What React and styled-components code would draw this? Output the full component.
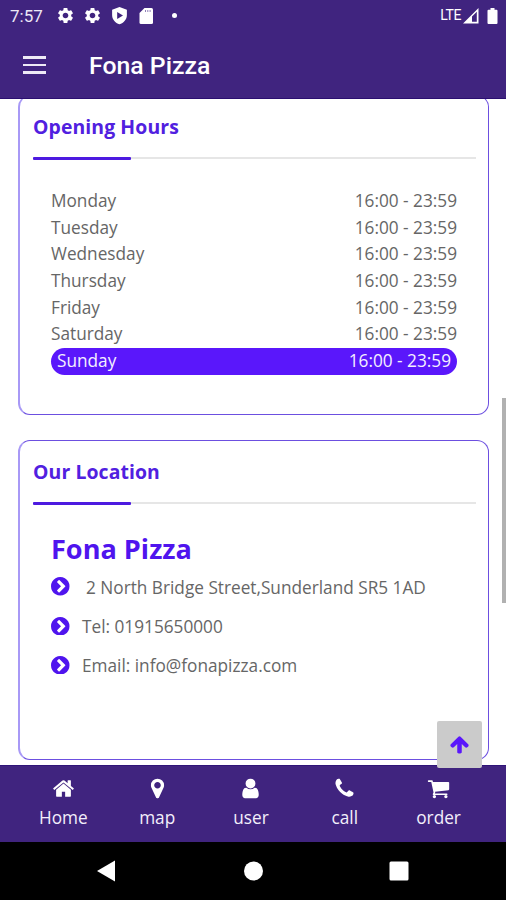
import React from "react";
import styled, { createGlobalStyle } from "styled-components";
import { MdSettings } from "react-icons/md";

const Global = createGlobalStyle`
  * { box-sizing: border-box; }
  body { margin: 0; background: #fff; font-family: "Open Sans", sans-serif; }
`;

const Screen = styled.div`
  width: 506px;
  height: 900px;
  display: flex;
  flex-direction: column;
  overflow: hidden;
  background: #fff;
`;

const StatusBar = styled.div`
  flex: none;
  height: 32px;
  display: flex;
  align-items: center;
  padding: 0 8px 0 10px;
  background: #40247f;
  color: #fff;
  font-family: Roboto, sans-serif;
`;

const Clock = styled.span`
  width: 46px;
  font-size: 17px;
  line-height: 32px;
  color: #ece8f6;
`;

const StatusIcons = styled.div`
  display: flex;
  align-items: center;
  gap: 8px;
  margin-top: -1px;
  svg { display: block; }
`;

const Dot = styled.span`
  width: 5px;
  height: 5px;
  margin-left: 9px;
  border-radius: 50%;
  background: #fff;
`;

const Network = styled.span`
  margin-left: auto;
  margin-top: -2px;
  margin-right: 2px;
  font-size: 14px;
  letter-spacing: -0.4px;
`;

const Signal = styled.svg`
  display: block;
  margin-right: 8px;
`;

const AppBar = styled.header`
  flex: none;
  height: 67px;
  display: flex;
  align-items: center;
  padding-left: 23px;
  background: #40247f;
  border-bottom: 1px solid #2b0f70;
`;

const MenuButton = styled.button`
  display: flex;
  flex-direction: column;
  gap: 5px;
  width: 23px;
  margin: 0 43px 0 0;
  padding: 0;
  border: 0;
  background: none;
`;

const MenuLine = styled.span`
  height: 2.5px;
  background: #eeeaf6;
`;

const AppTitle = styled.h1`
  margin: 2px 0 0;
  color: #fff;
  font: 500 24.8px/32px Roboto, sans-serif;
`;

const Content = styled.main`
  flex: none;
  height: 666px;
  display: flex;
  flex-direction: column;
  gap: 25px;
  padding: 0 17px 0 18px;
  overflow: hidden;
`;

const Card = styled.section`
  flex: none;
  height: ${(p) => p.$height}px;
  margin-top: ${(p) => p.$shift || 0}px;
  padding: 17px 12px 0 13px;
  border: 1px solid #6c4fe0;
  border-left: 2px solid #a899f6;
  border-radius: 12px;
`;

const CardTitle = styled.h2`
  margin: 0;
  color: #5120e0;
  font-size: 19.4px;
  line-height: 28px;
  font-weight: 700;
  letter-spacing: 0.1px;
`;

const Rule = styled.div`
  height: 3px;
  margin-top: 16px;
  background: linear-gradient(#e6e6e6, #e6e6e6) 0 0 / 100% 2px no-repeat;
`;

const RuleAccent = styled.div`
  width: 98px;
  height: 3px;
  border-radius: 1px;
  background: #4d1ae0;
`;

const Hours = styled.div`
  margin: 28px 19px 0 18px;
`;

const HoursRow = styled.div`
  display: flex;
  justify-content: space-between;
  height: 26.7px;
  padding: 0 ${(p) => (p.$active ? 6 : 0)}px;
  border-radius: 14px;
  background: ${(p) => (p.$active ? "#5a17fb" : "transparent")};
  color: ${(p) => (p.$active ? "#f4efff" : "#666")};
  font-size: 17.23px;
  line-height: 26.7px;
`;

const Location = styled.div`
  margin: 26px 18px 0;
`;

const PlaceName = styled.h3`
  margin: 0;
  color: #4f14ee;
  font-size: 27.1px;
  line-height: 36px;
  font-weight: 700;
`;

const ContactRow = styled.div`
  display: flex;
  align-items: center;
  gap: 12.5px;
  height: 39.2px;
  color: #666;
  font-size: 17.23px;
  svg { flex: none; }
`;

const ContactText = styled.span`
  white-space: pre;
  padding-top: 1px;
  padding-left: ${(p) => p.$indent || 0}px;
`;

const ScrollThumb = styled.div`
  position: absolute;
  left: 502px;
  top: 398px;
  width: 4px;
  height: 205px;
  background: #b1b1b1;
`;

const TopButton = styled.button`
  position: absolute;
  left: 437px;
  top: 721px;
  width: 45px;
  height: 47px;
  display: flex;
  align-items: center;
  justify-content: center;
  padding: 0;
  border: 0;
  border-radius: 2px;
  background: #cbcbcb;
`;

const TabBar = styled.nav`
  flex: none;
  height: 77px;
  display: grid;
  grid-template-columns: repeat(5, 93.8px);
  padding-left: 16.5px;
  background: #40247f;
  border-top: 1px solid #2f1478;
`;

const Tab = styled.a`
  display: flex;
  flex-direction: column;
  align-items: center;
  padding-top: 11px;
  color: #f3effb;
  font-size: 17.23px;
  line-height: 24px;
  svg { margin-bottom: 6px; color: #fff; }
`;

const SystemNav = styled.div`
  flex: none;
  height: 58px;
  display: flex;
  align-items: center;
  justify-content: center;
  background: #000;
`;

const PATHS = {
  home: "M1472 992v480q0 26-19 45t-45 19h-384v-384h-256v384h-384q-26 0-45-19t-19-45v-480q0-1 .5-3t.5-3l575-474 575 474q1 2 1 6zm223-69l-62 74q-8 9-21 11h-3q-13 0-21-7l-692-577-692 577q-12 8-24 7-13-2-21-11l-62-74q-8-10-7-23.5t11-21.5l719-599q32-26 76-26t76 26l244 204v-195q0-14 9-23t23-9h192q14 0 23 9t9 23v408l219 182q10 8 11 21.5t-7 23.5z",
  map: "M1152 640q0-106-75-181t-181-75-181 75-75 181 75 181 181 75 181-75 75-181zm256 0q0 109-33 179l-364 774q-16 33-47.5 52t-67.5 19-67.5-19-46.5-52l-365-774q-33-70-33-179 0-212 150-362t362-150 362 150 150 362z",
  user: "M1536 1399q0 109-62.5 187t-150.5 78h-854q-88 0-150.5-78t-62.5-187q0-85 8.5-160.5t31.5-152 58.5-131 94-89 134.5-34.5q131 128 313 128t313-128q76 0 134.5 34.5t94 89 58.5 131 31.5 152 8.5 160.5zm-256-887q0 159-112.5 271.5t-271.5 112.5-271.5-112.5-112.5-271.5 112.5-271.5 271.5-112.5 271.5 112.5 112.5 271.5z",
  call: "M1600 1240q0 27-10 70.5t-21 68.5q-21 50-122 106-94 51-186 51-27 0-53-3.5t-57.5-12.5-47-14.5-55.5-20.5-49-18q-98-35-175-83-127-79-264-216t-216-264q-48-77-83-175-3-9-18-49t-20.5-55.5-14.5-47-12.5-57.5-3.5-53q0-92 51-186 56-101 106-122 25-11 68.5-21t70.5-10q14 0 21 3 18 6 53 76 11 19 30 54t35 63.5 31 53.5q3 4 17.5 25t21.5 35.5 7 28.5q0 20-28.5 50t-62 55-62 53-28.5 46q0 9 5 22.5t8.5 20.5 14 24 11.5 19q76 137 174 235t235 174q2 1 19 11.5t24 14 20.5 8.5 22.5 5q18 0 46-28.5t53-62 55-62 50-28.5q14 0 28.5 7t35.5 21.5 25 17.5q25 15 53.5 31t63.5 35 54 30q70 35 76 53 3 7 3 21z",
  order: "M704 1536q0 52-38 90t-90 38-90-38-38-90 38-90 90-38 90 38 38 90zm896 0q0 52-38 90t-90 38-90-38-38-90 38-90 90-38 90 38 38 90zm128-1088v512q0 24-16.5 42.5t-40.5 21.5l-1044 122q13 60 13 70 0 16-24 64h920q26 0 45 19t19 45-19 45-45 19h-1024q-26 0-45-19t-19-45q0-11 8-31.5t16-36 21.5-40 15.5-29.5l-177-823h-204q-26 0-45-19t-19-45 19-45 45-19h256q16 0 28.5 6.5t19.5 15.5 13 24.5 8 26 5.5 29.5 4.5 26h1201q26 0 45 19t19 45z",
  chevron: "M845 1395l454-454q19-19 19-45t-19-45l-454-454q-19-19-45-19t-45 19l-102 102q-19 19-19 45t19 45l307 307-307 307q-19 19-19 45t19 45l102 102q19 19 45 19t45-19zm819-499q0 209-103 385.5t-279.5 279.5-385.5 103-385.5-103-279.5-279.5-103-385.5 103-385.5 279.5-279.5 385.5-103 385.5 103 279.5 279.5 103 385.5z",
  up: "M1675 971q0 51-37 90l-75 75q-38 38-91 38-54 0-90-38l-294-293v704q0 52-37.5 84.5t-90.5 32.5h-128q-53 0-90.5-32.5t-37.5-84.5v-704l-294 293q-36 38-90 38t-90-38l-75-75q-38-38-38-90 0-53 38-91l651-651q35-37 90-37 54 0 91 37l651 651q37 39 37 91z",
};

const Icon = ({ name, size, color, box = "0 0 1792 1792" }) => (
  <svg width={size} height={size} viewBox={box} fill={color || "currentColor"}>
    <path d={PATHS[name]} />
  </svg>
);

const Bullet = () => <Icon name="chevron" size={18.5} color="#4f14ee" box="128 128 1536 1536" />;

const DAYS = ["Monday", "Tuesday", "Wednesday", "Thursday", "Friday", "Saturday", "Sunday"];
const TABS = [
  ["home", "Home"],
  ["map", "map"],
  ["user", "user"],
  ["call", "call"],
  ["order", "order"],
];

export default function App() {
  return (
    <>
      <Global />
      <Screen>
        <StatusBar>
          <Clock>7:57</Clock>
          <StatusIcons>
            <MdSettings size={19} />
            <MdSettings size={19} />
            <svg width="19" height="19" viewBox="0 0 18 18">
              <path fill="#fff" fillRule="evenodd" d="M9 1 16 3.6V8.5C16 12.800 13 16 9 17.300 5 16 2 12.800 2 8.500V3.600ZM6.800 5.700V12.300L12.300 9Z" />
            </svg>
            <svg width="18" height="18" viewBox="0 0 18 18">
              <path fill="#fff" d="M7.500 1H14.500Q16 1 16 2.500V15.500Q16 17 14.500 17H4Q2.500 17 2.500 15.500V6Z" />
              <path stroke="#8f7fb8" strokeWidth="1" d="M8.500 3V5M10.800 3V5M13.100 3V5" />
            </svg>
            <Dot />
          </StatusIcons>
          <Network>LTE</Network>
          <Signal width="16" height="17" viewBox="0 0 16 17">
            <path fill="#fff" fillRule="evenodd" d="M0 15.500 15.500 0V15.500ZM9 8.500V13.800H13.800V3.700Z" />
          </Signal>
          <svg width="11" height="17" viewBox="0 0 11 17">
            <path fill="#fff" d="M3.500 0H7.500V1.700H9.500Q10.500 1.700 10.500 2.700V15Q10.500 16 9.500 16H1.500Q.5 16 .5 15V2.700Q.5 1.700 1.500 1.700H3.500Z" />
          </svg>
        </StatusBar>
        <AppBar>
          <MenuButton aria-label="Menu">
            <MenuLine />
            <MenuLine />
            <MenuLine />
          </MenuButton>
          <AppTitle>Fona Pizza</AppTitle>
        </AppBar>
        <Content>
          <Card $height={320} $shift={-4}>
            <CardTitle>Opening Hours</CardTitle>
            <Rule><RuleAccent /></Rule>
            <Hours>
              {DAYS.map((day) => (
                <HoursRow key={day} $active={day === "Sunday"}>
                  <span>{day}</span>
                  <span>16:00 - 23:59</span>
                </HoursRow>
              ))}
            </Hours>
          </Card>
          <Card $height={320}>
            <CardTitle>Our Location</CardTitle>
            <Rule><RuleAccent /></Rule>
            <Location>
              <PlaceName>Fona Pizza</PlaceName>
              <ContactRow>
                <Bullet />
                <ContactText $indent={4}>2 North Bridge Street,Sunderland SR5 1AD</ContactText>
              </ContactRow>
              <ContactRow>
                <Bullet />
                <ContactText>Tel: 01915650000</ContactText>
              </ContactRow>
              <ContactRow>
                <Bullet />
                <ContactText>Email: info@fonapizza.com</ContactText>
              </ContactRow>
            </Location>
          </Card>
        </Content>
        <TabBar>
          {TABS.map(([name, label]) => (
            <Tab key={name}>
              <Icon name={name} size={23} />
              {label}
            </Tab>
          ))}
        </TabBar>
        <SystemNav>
          <svg width="314" height="24" viewBox="0 0 314 24" fill="#fff">
            <path d="M1 12 19 1.500V22.500Z" />
            <circle cx="157.500" cy="12" r="9.500" />
            <rect x="293.500" y="2.500" width="19" height="19" rx="1.500" />
          </svg>
        </SystemNav>
      </Screen>
      <ScrollThumb />
      <TopButton aria-label="Scroll to top">
        <Icon name="up" size={21} color="#5a17fb" />
      </TopButton>
    </>
  );
}
